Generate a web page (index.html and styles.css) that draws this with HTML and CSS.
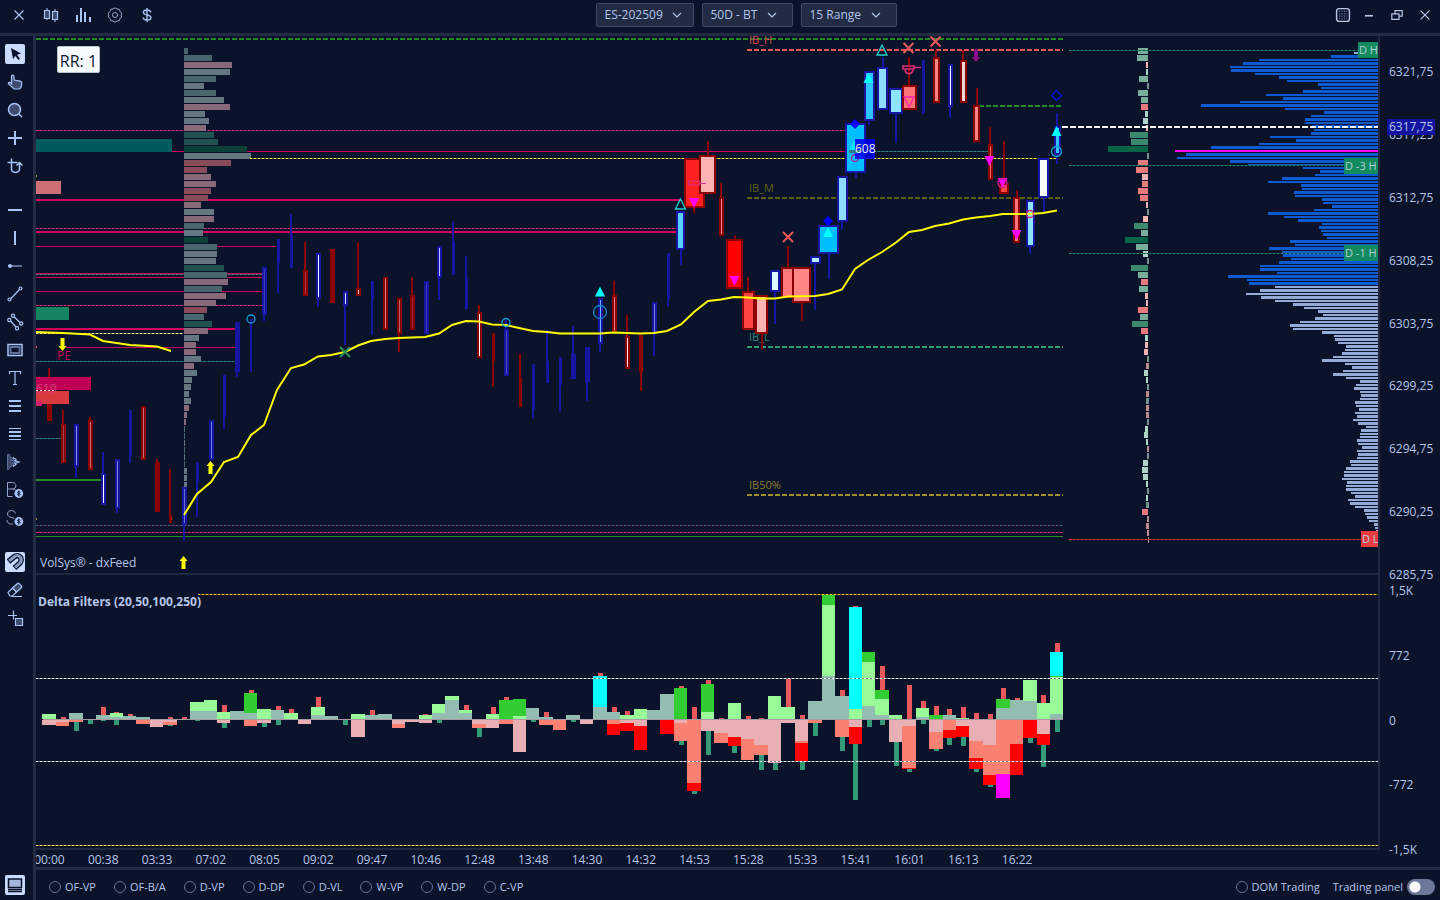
FILE: index.html
```
<!DOCTYPE html>
<html lang="en">
<head>
<meta charset="utf-8">
<title>VolSys chart</title>
<link rel="stylesheet" href="styles.css">
</head>
<body>
<div class="app">
  <header class="topbar">
    <div class="tools">
      <button class="icon" aria-label="Close chart"><svg viewBox="0 0 20 20"><path d="M5.500 5.500l9 9M14.500 5.500l-9 9"/></svg></button>
      <button class="icon" aria-label="Candles"><svg viewBox="0 0 20 20"><path d="M6 3v12M14 4v13" stroke-width="2" class="dim"/><path class="tint" d="M3.500 5.500h5v8h-5zM11.500 6.500h5v8h-5z"/></svg></button>
      <button class="icon" aria-label="Indicators"><svg viewBox="0 0 20 20"><path stroke-width="2" d="M4 10v7M8 3v14M12 7v10M17 12v5"/></svg></button>
      <button class="icon" aria-label="Settings"><svg viewBox="0 0 20 20"><path class="soft" d="M8 4q2-2.500 4 0 3-.5 3 2.300 2.500 1.700 1.200 3.700 1.300 2-1.200 3.700 0 2.800-3 2.300-2 2.500-4 0-3 .5-3-2.300Q2.500 12 3.800 10 2.500 8 5 6.300 5 3.500 8 4z"/><circle class="soft" cx="10" cy="10" r="2.500"/></svg></button>
      <button class="icon" aria-label="Account"><svg viewBox="0 0 20 20"><path stroke-width="1.400" d="M10 3v14M13.800 7.300C13.500 5.800 12 5 10 5 7.800 5 6.400 6 6.400 7.500c0 3.400 7.500 1.500 7.500 5 0 1.500-1.500 2.600-3.800 2.600-2.200 0-3.700-.9-4-2.600"/></svg></button>
    </div>
    <div class="selects">
      <label class="pick sym"><select aria-label="Symbol"><option>ES-202509</option></select><svg viewBox="0 0 10 6"><path d="M1 1l4 4 4-4"/></svg></label>
      <label class="pick per"><select aria-label="Period"><option>50D - BT</option></select><svg viewBox="0 0 10 6"><path d="M1 1l4 4 4-4"/></svg></label>
      <label class="pick rng"><select aria-label="Range"><option>15 Range</option></select><svg viewBox="0 0 10 6"><path d="M1 1l4 4 4-4"/></svg></label>
    </div>
    <div class="window">
      <button class="icon" aria-label="Snapshot"><svg viewBox="0 0 20 20"><rect x="2" y="2" width="16" height="16" rx="3" stroke-width="1.800"/><path class="dim" stroke-width="1.500" stroke-dasharray="1.500 1.500" d="M5 5.500h10M5 8.500h10M5 11.500h10M5 14.500h10"/></svg></button>
      <button class="icon" aria-label="Minimize"><svg viewBox="0 0 20 20"><path stroke-width="2" d="M5 11h10"/></svg></button>
      <button class="icon" aria-label="Restore"><svg viewBox="0 0 20 20"><path stroke-width="1.500" d="M3.500 8.500h9v7h-9zM7.500 8V4.500h9v7h-4"/></svg></button>
      <button class="icon" aria-label="Close"><svg viewBox="0 0 20 20"><path stroke-width="1.500" d="M4.500 4.500l11 11M15.500 4.500l-11 11"/></svg></button>
    </div>
  </header>

  <nav class="sidebar">
    <button class="icon on" aria-label="Select"><svg viewBox="0 0 20 20"><path fill="#0a122b" stroke="none" d="M6 4l10 5.500-4 1.200 3 4-1.600 1.300-3-4L8 15z"/></svg></button>
    <button class="icon" aria-label="Pan"><svg viewBox="0 0 20 20"><path class="tint" d="M6.500 11V4.500c0-1.800 2.500-1.800 2.500 0V8l6 1.200c1.500.4 2 1.300 1.700 3l-.7 3.300-1.500 1.500H9L3.300 11.500c.2-1.500 1.700-1.700 3.200 0z"/></svg></button>
    <button class="icon" aria-label="Zoom"><svg viewBox="0 0 20 20"><circle class="tint" cx="9.500" cy="9.500" r="6" stroke-width="1.500"/><path stroke-width="1.500" d="M14 14l3 3"/></svg></button>
    <button class="icon" aria-label="Crosshair"><svg viewBox="0 0 20 20"><path stroke-width="2" d="M3 10h14M10 3v14"/></svg></button>
    <button class="icon" aria-label="Path"><svg viewBox="0 0 20 20"><path stroke-width="1.500" d="M2.500 6.500h10M6.500 2.500V13c0 4.500 8 4.500 8 0V7M11.500 9.500l3-3 3 3"/></svg></button>
    <button class="icon gap" aria-label="Horizontal line"><svg viewBox="0 0 20 20"><path stroke-width="2" d="M3 10h14"/></svg></button>
    <button class="icon" aria-label="Vertical line"><svg viewBox="0 0 20 20"><path stroke-width="2" d="M10 3v14"/></svg></button>
    <button class="icon" aria-label="Ray"><svg viewBox="0 0 20 20"><path class="dim" stroke-width="2" d="M6 10h11"/><circle cx="5" cy="10" r="2" class="solid"/></svg></button>
    <button class="icon" aria-label="Trend line"><svg viewBox="0 0 20 20"><path d="M6 14.500l8-8.500"/><circle cx="4.500" cy="15.500" r="1.500"/><circle cx="15.500" cy="4.500" r="1.500"/></svg></button>
    <button class="icon" aria-label="Channel"><svg viewBox="0 0 20 20"><path d="M9.300 5l5.500 5.500M5.500 9l5.500 6"/><circle cx="8" cy="3.800" r="1.600"/><circle cx="4.300" cy="8" r="1.600"/><circle cx="16.200" cy="11.500" r="1.600"/><circle cx="12" cy="16.200" r="1.600"/></svg></button>
    <button class="icon" aria-label="Rectangle"><svg viewBox="0 0 20 20"><rect x="3" y="4.500" width="14" height="11" stroke-width="1.500"/><rect class="dim" x="5.500" y="7" width="9" height="6" stroke-width="2"/></svg></button>
    <button class="icon" aria-label="Text"><svg viewBox="0 0 20 20"><path d="M4.500 6V3.500h11V6M10 3.500v13M8 16.500h4"/></svg></button>
    <button class="icon" aria-label="Levels"><svg viewBox="0 0 20 20"><path stroke-width="2" d="M4 5h12M4 10h12M4 15h12"/></svg></button>
    <button class="icon" aria-label="Fibonacci"><svg viewBox="0 0 20 20"><path d="M4 4.500h12M4 15.500h12"/><path stroke-width="2" d="M4 8h12M4 12h12"/></svg></button>
    <button class="icon" aria-label="Volume profile"><svg viewBox="0 0 20 20"><path class="tint dim" stroke-width="1" d="M2.500 2.500h2l1 3 4 1-2 2 4 1.500-4 1.500 2 2-4 1-2 3h-1z"/><path d="M8 5.500l3 2-1 1 4 1.500-4 1.500 1 1-3 2"/></svg></button>
    <button class="icon" aria-label="Buy profile"><svg viewBox="0 0 20 20"><path class="soft" d="M2.500 16.500v-14h5c4.500 0 4.500 6.500 0 6.500h-5M7.500 9c2 0 3 1 3.500 2M2.500 16.500h5"/><circle class="solid" cx="13.800" cy="13.500" r="4.400"/><path class="ink" d="M13.800 10.500v6M15.500 12.300c-1-1-3.500-.7-3 .4s2.800.6 2.700 1.600-2 1-3 0"/></svg></button>
    <button class="icon" aria-label="Sell profile"><svg viewBox="0 0 20 20"><path class="soft" d="M10.500 5.500C10 1.500 2.500 1.500 2.500 6c0 4 6 3 7 5M2 12c0 3 2.500 4.500 6 4"/><circle class="solid" cx="13.800" cy="13.500" r="4.400"/><path class="ink" d="M13.800 10.500v6M15.500 12.300c-1-1-3.500-.7-3 .4s2.800.6 2.700 1.600-2 1-3 0"/></svg></button>
    <button class="icon on gap" aria-label="Magnet"><svg viewBox="0 0 20 20"><path stroke="#0a122b" fill="none" stroke-width="5.500" d="M3.500 9.500L9 5c5-4 9.500 2 6 6l-5.500 5"/><path stroke="#8799c0" fill="none" stroke-width="3" d="M4.300 8.900L9 5c5-4 9.500 2 6 6l-4.800 4.400"/></svg></button>
    <button class="icon" aria-label="Eraser"><svg viewBox="0 0 20 20"><path d="M3 12.500l4.500-4.500 4 4-4 4H5zM6.500 16.500H17"/><path class="tint" d="M7.500 8l5-4.500c1-.8 1.800-.3 4 2.500.7 1 .5 1.500-5 6z"/></svg></button>
    <button class="icon" aria-label="Add region"><svg viewBox="0 0 20 20"><path d="M3 7.500h9M8.500 2.500v9"/><path class="tint" d="M10.500 10.500h7v7h-7z"/></svg></button>
    <button class="icon on end" aria-label="Panel"><svg viewBox="0 0 20 20"><rect x="3.500" y="4" width="13" height="8.500" fill="#a3b5da" stroke="#0a122b" stroke-width="1.500"/><path stroke="#0a122b" stroke-width="1.300" d="M3 14.500h14M3 16.500h14"/></svg></button>
  </nav>

  <main class="charts">
    <section class="pane price">
      <svg id="price" viewBox="36 36 1342 537" preserveAspectRatio="none" role="img" aria-label="Price chart"></svg>
      <span class="ratio">RR: 1</span>
      <span class="credit">VolSys® - dxFeed</span>
    </section>
    <div class="scale price-scale">
      <span>6321,75</span><span>6317,25</span><span>6312,75</span><span>6308,25</span><span>6303,75</span><span>6299,25</span><span>6294,75</span><span>6290,25</span><span>6285,75</span>
      <b class="last">6317,75</b>
    </div>
    <section class="pane delta">
      <svg id="delta" viewBox="36 575 1342 273" preserveAspectRatio="none" role="img" aria-label="Delta chart"></svg>
      <span class="caption">Delta Filters (20,50,100,250)</span>
    </section>
    <div class="scale delta-scale"><span>1,5K</span><span>772</span><span>0</span><span>-772</span><span>-1,5K</span></div>
    <div class="times"><div class="ticks">
      <span>00:00</span><span>00:38</span><span>03:33</span><span>07:02</span><span>08:05</span><span>09:02</span><span>09:47</span><span>10:46</span><span>12:48</span><span>13:48</span><span>14:30</span><span>14:32</span><span>14:53</span><span>15:28</span><span>15:33</span><span>15:41</span><span>16:01</span><span>16:13</span><span>16:22</span>
    </div></div>
  </main>

  <footer class="bottombar">
    <div class="modes">
      <label><input type="radio" name="m1">OF-VP</label>
      <label><input type="radio" name="m2">OF-B/A</label>
      <label><input type="radio" name="m3">D-VP</label>
      <label><input type="radio" name="m4">D-DP</label>
      <label><input type="radio" name="m5">D-VL</label>
      <label><input type="radio" name="m6">W-VP</label>
      <label><input type="radio" name="m7">W-DP</label>
      <label><input type="radio" name="m8">C-VP</label>
    </div>
    <div class="trade">
      <label><input type="radio" name="dom">DOM Trading</label>
      <label class="panel">Trading panel<input type="checkbox" class="switch"></label>
    </div>
  </footer>
</div>
<script src="chart.js"></script>
</body>
</html>
```
FILE: styles.css
```
* { box-sizing: border-box; }
body {
  margin: 0;
  background: #0b132b;
  color: #b5c6e8;
  font: 12px/16px "Open Sans", "Noto Sans", sans-serif;
}
.app {
  display: grid;
  grid-template: "top top" 36px "side main" 1fr "side foot" 33px / 36px 1fr;
  height: 100vh;
  overflow: hidden;
}
button { background: none; border: 0; padding: 0; }
.icon { display: block; width: 20px; height: 20px; border-radius: 2px; flex: none; }
.icon svg { display: block; width: 100%; height: 100%; fill: none; stroke: #a9c4f7; stroke-width: 1.2; }
.icon .tint { fill: #3f4c70; }
.icon .dim { stroke: #5e7099; }
.icon .soft { stroke: #93a5cc; stroke-width: 1; }
.icon .solid { fill: #a9c4f7; stroke: none; }
.icon .ink { stroke: #0b132b; stroke-width: 0.9; }
.icon.on { background: #c9dbff; }

.topbar {
  grid-area: top;
  display: flex;
  justify-content: space-between;
  padding: 0 7px 3px 9px;
  border-bottom: 3px solid #232b45;
  align-items: center;
}
.tools { display: flex; gap: 12px; }
.selects { display: flex; gap: 8px; }
.pick { position: relative; display: block; height: 24px; }
.pick select {
  appearance: none;
  width: 100%;
  height: 24px;
  padding: 0 8px;
  border: 1px solid #3f4a68;
  border-radius: 2px;
  background: #222a44;
  color: #b5c6e8;
  font: inherit;
}
.pick svg { position: absolute; right: 12px; top: 9px; width: 10px; height: 6px; fill: none; stroke: #b5c6e8; stroke-width: 1.2; pointer-events: none; }
.sym { width: 98px; }
.per { width: 91px; }
.rng { width: 96px; }
.per svg, .rng svg { right: 16px; }
.window { display: flex; gap: 12px; }
.window .icon { width: 16px; height: 16px; }
.window .icon:first-child { margin-right: -2px; }
.window .icon svg { stroke: #b5c6e8; }

.sidebar {
  grid-area: side;
  display: flex;
  flex-direction: column;
  gap: 8px;
  padding: 8px 5px 5px;
  border-right: 3px solid #232b45;
}
.sidebar .gap { margin-top: 16px; }
.sidebar .end { margin-top: auto; }

.charts {
  grid-area: main;
  display: grid;
  grid-template: minmax(0, 539fr) minmax(0, 275fr) 17px / minmax(0, 1fr) 60px;
}
.pane { position: relative; border-right: 2px solid #1f2741; border-bottom: 2px solid #1f2741; }
.pane svg { display: block; width: 100%; height: 100%; }
.pane text { font: 11px "Open Sans", "Noto Sans", sans-serif; }
.pane .large { font-size: 12px; }
.ratio {
  position: absolute;
  left: 21px;
  top: 10px;
  width: 43px;
  height: 27px;
  background: #f5fbff;
  color: #101430;
  border: 1px solid #b9c4cf;
  border-radius: 2px;
  font-size: 16px;
  line-height: 28px;
  text-align: center;
  white-space: nowrap;
}
.credit { position: absolute; left: 4px; bottom: 2px; }
.caption { position: absolute; left: 2px; top: 19px; font-weight: 700; }
.scale { display: flex; flex-direction: column; justify-content: space-between; padding-left: 9px; }
.price-scale { position: relative; padding-top: 28px; margin-bottom: -8px; }
.last { position: absolute; left: 7px; top: 83px; padding: 0 2px; background: #1414a0; font-weight: 400; }
.delta-scale { grid-row: 2 / 4; grid-column: 2; padding-top: 8px; padding-bottom: 9px; }
.times { overflow: hidden; }
.ticks { display: grid; grid-template-columns: repeat(19, minmax(0, 1fr)); width: 76%; margin-left: -1%; text-align: center; line-height: 20px; }

.bottombar {
  grid-area: foot;
  display: flex;
  justify-content: space-between;
  align-items: center;
  border-top: 3px solid #232b45;
  padding: 4px 5px 0 13px;
  font-size: 11px;
}
.modes { display: flex; gap: 18px; }
.trade { display: flex; gap: 13px; }
.bottombar label { display: flex; align-items: center; gap: 4px; white-space: nowrap; }
.bottombar input { appearance: none; margin: 0; width: 12px; height: 12px; border: 1px solid #63718f; border-radius: 50%; }
.bottombar .switch {
  width: 28px;
  height: 16px;
  border: 0;
  border-radius: 8px;
  background: radial-gradient(circle at 8px 8px, #fff 5px, #6b7899 6px);
}
```
FILE: chart.js
```
var BLUE = '#1616a2', RED = '#8b0000', PINK = '#d0005c';
var out = [];
function rect(x, y, w, h, fill, extra) {
  out.push('<rect x="' + x + '" y="' + y + '" width="' + w + '" height="' + h + '" fill="' + fill + '" ' + (extra || '') + '/>');
}
function line(x1, x2, y, color, w, dash) {
  out.push('<path d="M' + x1 + ' ' + y + 'H' + x2 + '" stroke="' + color + '" stroke-width="' + (w || 1) + '"' + (dash ? ' stroke-dasharray="' + dash + '"' : '') + '/>');
}
function dotted(x1, x2, y, dark, bright) { line(x1, x2, y, dark); line(x1, x2, y, bright, 1, '2 2'); }
function path(d, stroke, fill, w) {
  out.push('<path d="' + d + '" stroke="' + (stroke || 'none') + '" fill="' + (fill || 'none') + '" stroke-width="' + (w || 1.3) + '"/>');
}
function text(x, y, s, color, large) {
  out.push('<text x="' + x + '" y="' + y + '" fill="' + color + '"' + (large ? ' class="large"' : '') + '>' + s + '</text>');
}
function cx(i) { return 49.3 + 13.435 * i; }

/* session lines */
line(36, 1063, 39, '#228b22', 2, '5 2');
line(747, 1063, 50, '#e8585c', 2, '5 2');
line(979, 1063, 106, '#228b22', 2, '5 2');
line(747, 1063, 198, '#5f5f10', 2, '5 2');
line(747, 1063, 347, '#2f9b78', 2, '5 2');
line(747, 1063, 495, '#a08f2c', 2, '5 2');
text(749, 44, 'IB_H', '#d04a52'); text(749, 192, 'IB_M', '#5f5f10');
text(749, 341, 'IB_L', '#2a8a74'); text(749, 489, 'IB50%', '#8b7d2c');
dotted(36, 855, 130.5, '#7d1450', '#e03080');
line(172, 846, 151.5, PINK);
dotted(866, 990, 151.5, '#145858', '#2c8080');
line(36, 681, 200, PINK, 2);
dotted(36, 681, 228.5, '#7d1450', '#e03080');
line(36, 681, 232, PINK, 2);
line(36, 276, 246.5, PINK);
line(36, 263, 273.5, PINK); dotted(36, 263, 274.5, '#145858', '#5a8080');
line(36, 263, 277.5, PINK); line(36, 263, 291.5, PINK);
dotted(36, 263, 305.5, '#7d1450', '#e03080');
line(36, 237, 329, PINK, 2);
line(66, 237, 347.5, PINK);
dotted(36, 237, 361.5, '#145858', '#2c8080');
dotted(36, 63, 438.5, '#145858', '#2c8080');
line(36, 101, 480, '#228b22', 2);
dotted(36, 1063, 525.5, '#5c1450', '#3c7080');
dotted(36, 1063, 532.5, '#7d1450', '#e03080');
line(36, 1063, 536.5, '#228b22');
rect(36, 139, 136, 13, '#005c5c'); rect(36, 181, 25, 13, '#cd7075');
rect(36, 307, 33, 13, '#158460');
rect(36, 175, 1, 2, '#a08f2c'); rect(36, 346, 1, 2, '#e8585c'); rect(36, 518, 1, 2, '#a08f2c');

/* session volume profile */
var profile = 'g4 g28 p48 y46 g32 y20 g32 y40 p46 y21 y25 p22 d30 d34 k63 y67 r47 r23 p27 p32 r27 r24 p17 y30 p30 g20 y19 k24 g33 y33 y32 d40 g43 p44 g38 p42 p32 r23 g20 d28 p24 y15 p12 p12 y17 p10 y13 y8 y7 y5 y7 p5 p3 p2 g1 g1 y1 g1 y1 g1 y3 y3 y3 y3'.split(' ');
var tone = { g: '#48666b', p: '#88697a', y: '#64767f', d: '#20524f', k: '#094139', r: '#884b59' };
profile.forEach(function (v, k) { rect(184, 48 + 7 * k, +v.slice(1), 6, tone[v[0]]); });
dotted(250, 1057, 158.5, '#777715', '#ffff40');
dotted(36, 183, 333.5, '#777755', '#ffffa0');

/* candles: direction, high, low, body top, body bottom, width, inner fill */
var candles = [
 ['r',368,421,395,421,5,''],['r',410,463,424,463,5,'#9b4343'],['b',424,478,424,467,5,'#8888dd'],['r',417,470,420,470,5,'#cd6868'],['b',452,505,473,505,5,'#fff'],['b',459,513,459,509,5,'#7a86df'],['b',410,463,410,456,3,''],['r',406,460,406,460,5,'#cd7070'],['r',459,512,462,512,5,''],['r',469,523,515,523,3,''],
 ['b',487,541,487,525,5,'#6470d0'],['b',462,517,462,483,3,''],['b',420,460,420,460,5,'#6f80dd'],['b',375,429,375,417,3,''],['b',322,377,322,372,5,''],['b',319,372,319,321,3,''],['b',267,321,267,315,5,'#3b3bb8'],['b',239,293,239,263,3,''],['b',214,268,235,268,3,''],['r',242,296,270,296,5,'#a83b3b'],
 ['b',253,307,253,299,5,'#e8f0ff'],['r',249,303,249,303,5,''],['b',291,345,291,306,5,'#cfdcff'],['r',242,296,288,296,5,'#ffd0d0'],['b',281,335,281,299,3,''],['r',277,330,277,330,5,'#e08484'],['r',298,352,298,334,5,'#c06060'],['r',277,330,295,330,5,'#a02a2a'],['b',281,334,281,334,5,'#3b3bb8'],['b',246,300,246,278,5,'#b8c4ff'],
 ['b',221,275,242,275,3,''],['b',256,309,277,309,3,''],['r',305,358,312,358,5,'#fff'],['r',333,387,333,361,3,''],['b',320,376,329,376,5,'#4a50c4'],['r',354,407,378,407,3,''],['b',364,419,364,410,3,''],['b',330,383,361,383,3,''],['b',357,412,357,385,3,''],['b',326,379,354,379,5,''],
 ['b',347,401,347,382,5,''],['b',298,352,298,344,5,'#6db4ff'],['r',281,333,295,333,5,'#e88080'],['r',315,369,336,369,5,'#ffe4e4'],['r',335,391,335,372,4,''],['b',302,356,302,334,5,'#7480dc'],['b',253,307,253,298,3,''],['b',211,265,211,250,9,'#59d0ff'],['r',158,213,158,208,21,'#ff2020'],['r',141,194,155,194,17,'#ffb3b3'],
 ['r',183,236,197,236,5,'#ff9090'],['r',235,289,239,289,17,'#ff0000'],['r',277,330,291,330,13,'#ff4545'],['r',295,349,295,334,13,'#ffb3b3'],['b',270,324,270,292,10,'#dcf6ff'],['r',246,298,267,298,15,'#ff7b7b'],['r',267,321,267,303,19,'#ff8585'],['b',256,310,256,264,11,'#b6ecff'],['b',225,279,225,254,21,'#00bfff'],['b',176,230,176,222,11,'#8cdcff'],
 ['b',123,178,123,173,21,'#00bfff'],['b',71,125,71,121,11,'#30c4ff'],['b',57,110,67,110,11,'#8cdcff'],['b',88,143,88,114,14,'#8ce4ff'],['r',57,110,85,110,15,'#ff7575'],['b',60,114,60,114,3,''],['r',50,103,57,103,7,'#ff8585'],['b',64,118,64,107,5,'#fff'],['r',50,103,60,103,7,'#ffd8d8'],['r',88,142,105,142,7,'#ff8585'],
 ['r',127,180,144,180,5,'#ff6060'],['r',141,194,183,194,10,'#ff4545'],['r',190,243,197,243,7,'#ff7575'],['b',200,254,200,247,9,'#8ce4ff'],['b',158,213,158,198,11,'#f5fbff'],['b',113,164,126,155,7,'#30c4ff']
];
candles.forEach(function (c, i) {
  var col = c[0] === 'b' ? BLUE : RED, mid = 49.3 + 13.44 * i, x = Math.round(mid), w = c[5];
  var left = w < 6 ? x - Math.floor(w / 2) : Math.round(mid - w / 2);
  rect(x - 1, c[1], 2, c[2] - c[1], col);
  rect(left, c[3], w, c[4] - c[3], col);
  if (c[6]) rect(left + 2, c[3] + 2, w - 4, c[4] - c[3] - 4, c[6]);
});
rect(36, 377, 55, 13, '#bf0054'); rect(36, 391, 33, 13, '#d93a3f');
rect(36, 401, 6, 5, '#d3206c');
text(36, 393, '610', '#d8407c', true); text(57, 360, 'PE', '#c00056', true);
line(36, 56, 390.5, '#ffd0d0', 1, '2 2');

/* moving averages */
path('M36 332L63 333 90 334.500 103 341 130 345 157 346.500 171 351', '#ffff00', '', 2);
path('M184 515L197 494 211 482 224 462 238 457 251 435 264 425 277 390 291 368 304 364.500 318 356.500 331 355 345 352 358 345.500 371 341 385 339 398 338 425 337 439 333.500 452 325 466 321 479 321.500 492 324.500 506 325 519 328 533 331 547 332 560 333.500 600 333.500 613 332.500 640 333.500 654 333 667 331 681 324.500 694 312 708 301 721 299.500 734 297 748 297.500 761 298.500 775 298.500 788 296.500 815 296 828 294 842 289.500 855 269 868 260 882 252 896 242.500 909 232 922 230 935 226 949 223.500 963 219.500 976 217.500 990 216 1003 214 1030 214 1043 213 1057 210.500', '#ffff00', '', 2);

/* markers */
function tri(x, y, fill, stroke) { path('M' + x + ' ' + (y - 5) + 'l5 10h-10z', stroke, fill); }
function down(x, y, fill, stroke) { path('M' + (x - 5) + ' ' + (y - 5) + 'h10l-5 10z', stroke, fill); }
function ring(x, y, r, c) { out.push('<circle cx="' + x + '" cy="' + y + '" r="' + r + '" fill="none" stroke="' + c + '" stroke-width="1.300"/>'); }
function cross(x, y, c) { path('M' + (x - 5) + ' ' + (y - 5) + 'l10 10m0-10l-10 10', c, '', 2); }
function diamond(x, y, fill, stroke) { path('M' + x + ' ' + (y - 5) + 'l5 5-5 5-5-5z', stroke, fill, 1.600); }
function arrow(x, y, dir, c) { path('M' + x + ' ' + y + 'l4 ' + 5 * dir + 'h-2v' + 8 * dir + 'h-4v' + -8 * dir + 'h-2z', '', c); }
arrow(183.500, 556, 1, '#ffff00'); arrow(210.500, 461, 1, '#ffff00');
arrow(62.500, 351, -1, '#ffff00'); arrow(976, 62, -1, '#8b0a8b');
ring(251, 319, 4, '#10a0d0'); ring(506, 322.500, 4, '#10a0d0'); ring(600, 312, 6.500, '#108ac0');
ring(1056.500, 151.500, 5, '#10a0d0'); ring(1030, 214, 3.500, '#d03070'); ring(855, 158, 3.500, '#a02090');
cross(345, 352, '#2f8b5c'); cross(788, 237, '#e8585c'); cross(908.500, 48, '#e8585c'); cross(935.500, 41.500, '#e8585c');
tri(600, 291.500, '#00ffff'); tri(828, 232, '#00ffff'); tri(868.500, 78, '#00ffff'); tri(1056.500, 131, '#00ffff'); tri(854, 146, '#00e5ff');
tri(680.500, 204, 'none', '#20d0d0'); tri(882, 50, 'none', '#20d0d0');
down(694, 203, '#ff00ff'); down(734.500, 281, '#ff00ff'); down(989.500, 161, '#ff00ff'); down(1002.500, 183, '#ff00ff'); down(1016.500, 235, '#ff00ff');
down(909, 102, 'none', '#ff20b0'); ring(1002.500, 183, 4.500, '#d02090');
diamond(828, 221, '#0000ff'); diamond(855, 124, '#0000ff'); diamond(1056.500, 95.500, 'none', '#1010c8');
path('M903 66h11v3h-11zM914 67.500h7M905 70c1 5 7 5 8 0', '#d83078', '', 1.600);
path('M688.500 181h11v4h-11zM699 183.500h7', '#d03088', '', 1.200);
rect(855, 139, 20, 20, '#0000ee', 'fill-opacity=".85"');
rect(849, 150, 12, 3, '#2b7890');
text(855, 153, '608', '#e8eeff', true);

/* delta histogram */
var side = 'g10 g11 p2 l2 g9 y1 g10 g7 r7 l3 l5 p2 d18 d17 k40 y1 r10 r12 p6 r6 r10 r8 p2 y1 p5 d14 g7 k23 g12 l5 y1 d17 g10 r7 g9 p3 p2 r10 g8 d16 r7 l3 p3 p4 y1 q2 l4 l2 y1 q2 y2 q2 q2 y1 l3 l4 l2 q1 y1 l5 l6 l5 l2 y1 l2 y2 r6 q1 q2 q1 q0'.split(' ');
var stone = { g: '#79ae9d', p: '#f0b4b4', l: '#aed3c8', y: '#77918e', r: '#e77a7c', d: '#3b8a70', k: '#056546', q: '#b98a90' };
side.forEach(function (v, k) {
  var n = +v.slice(1), t = 'yq'.indexOf(v[0]) >= 0;
  rect(1148 - n, 48 + 7 * k - (k > 54 ? 1 : 0), n + (t ? 1 : 0), 6, stone[v[0]]);
});

/* composite volume profile, bar lengths in rows of 3.5 */
var comp = [25,48,120,136,149,148,124,100,92,61,58,76,113,96,139,178,94,55,68,74,74,67,65,68,109,83,120,168,204,193,202,149,131,76,59,64,97,111,78,77,85,84,57,56,47,65,111,95,81,57,60,58,56,52,89,84,110,97,96,88,100,119,119,102,151,132,130,104,119,133,118,104,86,75,61,56,64,79,89,86,57,45,44,41,33,34,37,46,57,34,27,36,46,33,19,23,25,19,18,19,24,23,20,24,22,26,21,13,18,19,19,22,21,17,22,21,22,29,28,33,35,35,37,32,33,33,28,24,31,29,24,15,14,12,10,5,4,3];
comp.forEach(function (n, k) {
  var odd = k % 2, y, h;
  if (k < 33) { y = odd ? 55 + 3.5 * (k - 1) : 52 + 3.5 * k; h = odd ? 3 : 2; }
  else if (k < 110) { y = odd ? 167 + 3.5 * (k - 33) : 170 + 3.5 * (k - 34); h = odd ? 2 : 3; }
  else { y = odd ? 439 + 3.5 * (k - 111) : 436 + 3.5 * (k - 110); h = odd ? 3 : 2; }
  rect(1379 - n, y, n, h, k === 28 ? '#ff00ff' : k === 0 || k > 66 ? '#93abd6' : '#0d5bd3');
});
dotted(1069, 1358, 50.5, '#0b4a48', '#169068');
dotted(1069, 1344, 165.5, '#0b4a48', '#169068');
dotted(1069, 1344, 253.5, '#0b4a48', '#169068');
dotted(1069, 1361, 539.5, '#8a2838', '#e83a40');
line(1062, 1379, 127, '#fff', 2, '6 2');
function tag(x, y, s, c) { rect(x, y, 1379 - x, 16, c); text(x + 1, y + 12, s, '#b5d0d8'); }
tag(1358, 42, 'D H', '#128a60'); tag(1344, 158, 'D -3 H', '#128a60'); tag(1344, 245, 'D -1 H', '#128a60'); tag(1361, 531, 'D L', '#e83a40');
document.getElementById('price').innerHTML = out.join('');

/* delta filters: up segments | down segments | wick up | wick down, cumulative heights */
out = [];
var bars = ['b5|e5','|e2f6|2','a6|f2||12','|||5','a4||12|2','a2b6||7|6','a3||5','a2|f4','|e7','|e2f5|2|7','||2','a8b17|||2','a8b19','b7|e3|14|9','a8','a6c26|f6|29','b10|e3||8','a9||13|6','b6||10|1','|e4','a4b12||22','a3','|||6','b5|e17','a4||9','a5','|e4f8','|e2',
 'b4|e3|5','a6b15|||4','a19b23','a6b9||14|1','|e4f8||18','b5|e8|12','c19|f4|22','b3c20|e32||33','a11|||3','a2|f5|7','|f10||11','a4|||3','|e4','a12d43||46','a7|f4g15|12|16','b4|e3g11|8','b10|e6g30||31','a9','a25|g14','c31|e3f21|33|26','|f63g71|12|75','b7c35|e11|39|36','|e13f23|1','b16|e17g26||34',
 '|e19f40|3','|e25f35|1|51','b23|e43||51','b12|e3|41','|e21f23g41|4|51','a18|f3||17','a43b114c124','a23|f17|29|32','b10d112|e7g24|113|81','a13b57c67|||8','a4b20c29||53|6','b4|e22||47','|e6f48g49|34|53','a2b11||18|5','c4|e12f29|13|32','a4|f10g18|10|26','b1|e6g17|12|27','|e21f38g49|6|53','|e25f55g65|5|68','a11c20|f54h78|31','a19|f24g55|21','a18b39|g18||24','b16|e14g25|24|48','a5b42c43d67||76|13'];
var hue = { a: '#94bdb2', b: '#98fb98', c: '#32cd32', d: '#00ffff', e: '#e8b0b4', f: '#fa8072', g: '#ff0000', h: '#ff00ff' };
dotted(198, 1378, 594.5, '#6f5f18', '#f2cb10');
bars.forEach(function (b, i) {
  var p = b.split('|'), x = Math.round(cx(i) - 6.9), w = Math.round(cx(i + 1) - 6.9) - x, z = 719, m = Math.round(cx(i)) - 2;
  if (p[2]) rect(m, z - p[2], 5, +p[2], '#e8585c');
  if (p[3]) rect(m, z, 5, +p[3], '#349b78');
  [p[0], p[1] || ''].forEach(function (s, dn) {
    var prev = 0;
    (s.match(/[a-h]\d+/g) || []).forEach(function (q) {
      var n = +q.slice(1);
      rect(x, dn ? z + 1 + prev : z - n, w, n - prev, hue[q[0]]);
      prev = n;
    });
  });
});
line(43, 1063, 719.5, '#a89aa0');
dotted(36, 1378, 678.5, '#777e8c', '#ffffff');
dotted(36, 1378, 761.5, '#777e8c', '#ffffff');
dotted(36, 1378, 845.5, '#8a7b30', '#f5dc60');
document.getElementById('delta').innerHTML = out.join('');
```
